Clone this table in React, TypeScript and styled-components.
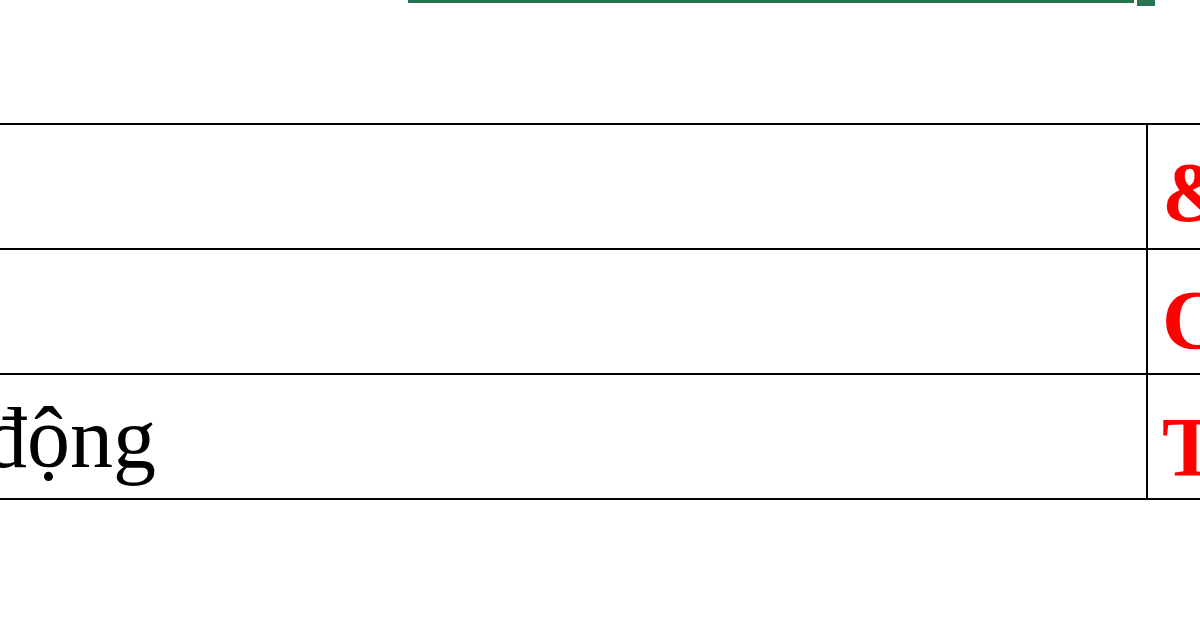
import React from "react";
import styled, { createGlobalStyle } from "styled-components";

const Global = createGlobalStyle`
  html, body { margin: 0; padding: 0; overflow: hidden; background: #ffffff; }
  body { width: 1200px; height: 630px; font-family: "Liberation Serif", "Times New Roman", serif; }
`;

const Page = styled.div`
  width: 1200px;
  height: 630px;
  overflow: hidden;
  position: relative;
  background: #ffffff;
`;

const TopBar = styled.div`
  display: flex;
  align-items: flex-start;
  gap: 3px;
  padding-left: 408px;
  height: 123px;
`;

const GreenLine = styled.div`
  width: 726px;
  height: 3px;
  background: #2a7551;
`;

const GreenSquare = styled.div`
  width: 18px;
  height: 6px;
  background: #2a7551;
`;

const Table = styled.div`
  margin-left: -30px;
  width: 1500px;
  display: flex;
  flex-direction: column;
  border-bottom: 2px solid #000;
`;

const Row = styled.div`
  display: grid;
  grid-template-columns: 1178px 1fr;
  box-sizing: border-box;
  height: 125px;
  border-top: 2px solid #000;
`;

const LeftCell = styled.div`
  border-right: 2px solid #000;
  padding-left: 14px;
  padding-top: 20px;
  font-size: 86px;
  line-height: 86px;
  color: #000;
  white-space: nowrap;
`;

const RightCell = styled.div<{ $top: number }>`
  padding-left: 14px;
  padding-top: ${(p) => p.$top}px;
  font-size: 84px;
  line-height: 84px;
  font-weight: bold;
  color: #ff0000;
  white-space: nowrap;
`;

const rows = [
  { left: "", right: "& Sự kiện", top: 26 },
  { left: "", right: "Công ty", top: 29 },
  { left: "động", right: "Tổ chức", top: 31 },
];

export default function App() {
  return (
    <Page>
      <Global />
      <TopBar>
        <GreenLine />
        <GreenSquare />
      </TopBar>
      <Table>
        {rows.map((r, i) => (
          <Row key={i}>
            <LeftCell>{r.left}</LeftCell>
            <RightCell $top={r.top}>{r.right}</RightCell>
          </Row>
        ))}
      </Table>
    </Page>
  );
}
